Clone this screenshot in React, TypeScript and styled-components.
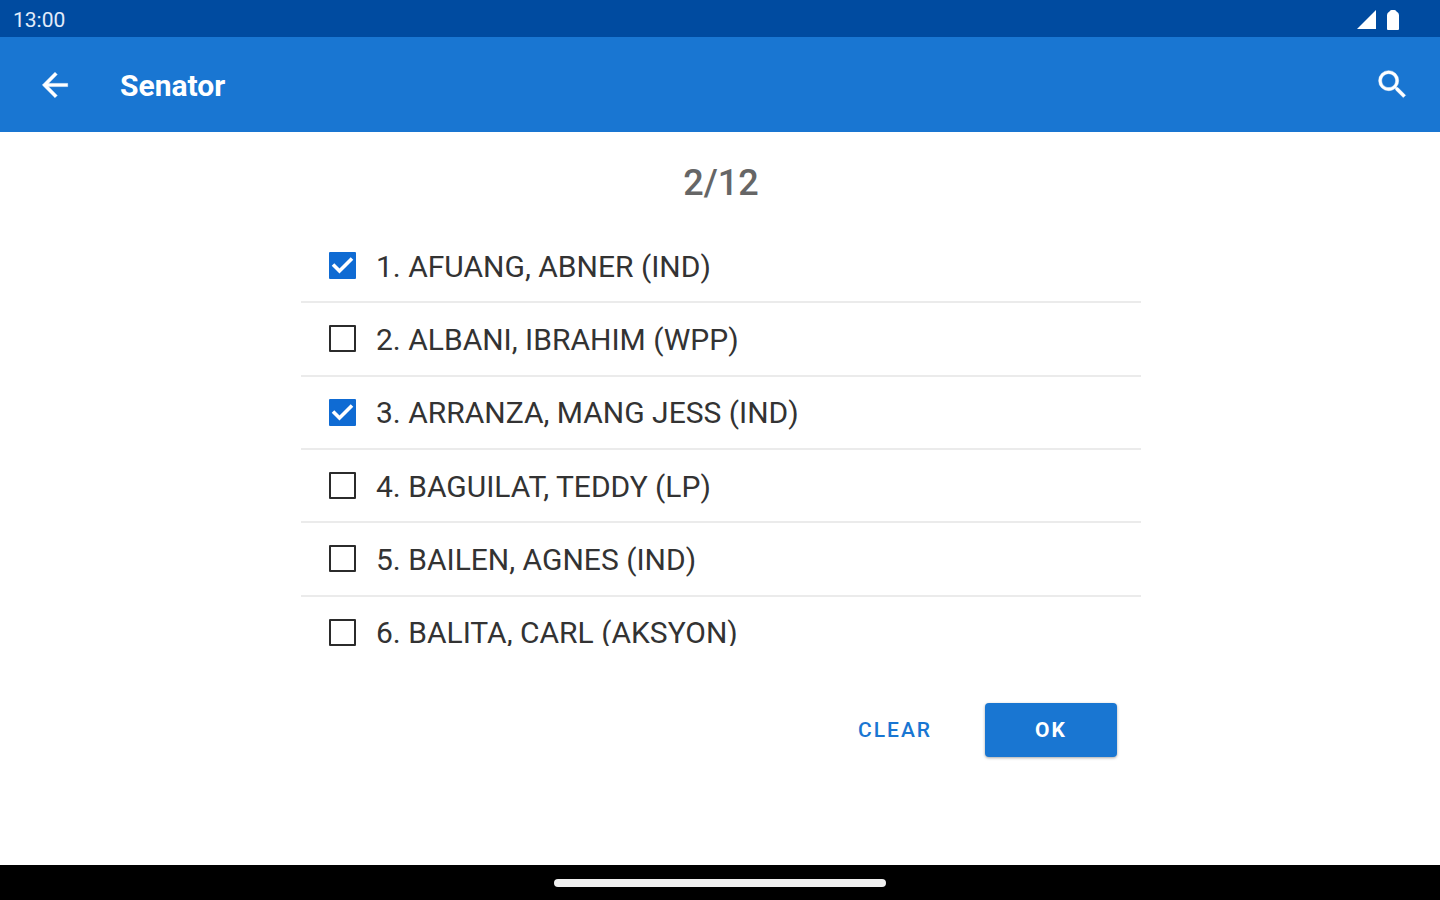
import React, { useState } from "react";
import styled, { createGlobalStyle } from "styled-components";

const GlobalStyle = createGlobalStyle`
  *, *::before, *::after { box-sizing: border-box; }
  body {
    margin: 0;
    background: #ffffff;
    color: #333333;
    font-family: Roboto, "Liberation Sans", sans-serif;
  }
`;

const Screen = styled.div`
  display: flex;
  flex-direction: column;
  min-height: 100vh;
`;

const StatusBar = styled.div`
  display: flex;
  align-items: center;
  justify-content: space-between;
  height: 37px;
  padding: 2px 41px 0 13px;
  background: #004ba0;
  color: #e3ecfa;
  font-size: 21px;
  line-height: 24px;
`;

const StatusIcons = styled.div`
  display: flex;
  align-items: center;
  gap: 11px;
`;

const AppBar = styled.header`
  display: flex;
  align-items: center;
  height: 95px;
  padding: 0 29px 0 36px;
  background: #1976d2;
  color: #ffffff;
`;

const IconButton = styled.button`
  display: flex;
  align-items: center;
  justify-content: center;
  width: 38px;
  height: 48px;
  padding: 0;
  border: 0;
  background: none;
  color: inherit;
  cursor: pointer;
`;

const Title = styled.h1`
  flex: 1;
  margin: 0 0 0 46px;
  padding-top: 2px;
  font-size: 30px;
  font-weight: 700;
  line-height: 36px;
`;

const Content = styled.main`
  display: flex;
  flex: 1;
  flex-direction: column;
  align-items: center;
  padding: 29px 24px 28px 26px;
`;

const Counter = styled.p`
  margin: 0 0 25px;
  color: #666666;
  font-size: 36px;
  font-weight: 500;
  line-height: 44px;
`;

const ListViewport = styled.div`
  width: 100%;
  max-width: 840px;
  height: 416px;
  overflow: hidden;
`;

const CandidateList = styled.ul`
  display: flex;
  flex-direction: column;
  height: 440px;
  margin: 0;
  padding: 0;
  list-style: none;
`;

const CandidateRow = styled.li`
  display: flex;
  flex: 1;
  border-bottom: 2px solid #ebebeb;
`;

const CandidateLabel = styled.label`
  display: flex;
  flex: 1;
  align-items: center;
  gap: 20px;
  padding: 0 28px;
  font-size: 30px;
  font-weight: 400;
  line-height: 36px;
  cursor: pointer;
`;

const CandidateName = styled.span`
  padding-top: 2px;
`;

const CheckFrame = styled.span`
  display: grid;
  width: 27px;
  height: 27px;

  > * {
    grid-area: 1 / 1;
  }
`;

const CheckInput = styled.input`
  appearance: none;
  width: 27px;
  height: 27px;
  margin: 0;
  border: 2px solid #2b2b2b;
  border-radius: 1px;
  cursor: pointer;

  &:checked {
    border-color: #0f6bd3;
    background: #0f6bd3;
  }
`;

const Actions = styled.div`
  display: flex;
  justify-content: flex-end;
  gap: 30px;
  width: 100%;
  max-width: 840px;
  margin-top: 57px;
  padding: 0 24px;
`;

const ActionButton = styled.button<{ $filled?: boolean }>`
  min-width: ${({ $filled }) => ($filled ? "132px" : "120px")};
  height: 54px;
  padding: 0 20px;
  border: 0;
  border-radius: 4px;
  background: ${({ $filled }) => ($filled ? "#1976d2" : "transparent")};
  box-shadow: ${({ $filled }) => ($filled ? "0 1px 3px rgba(0, 0, 0, 0.35)" : "none")};
  color: ${({ $filled }) => ($filled ? "#ffffff" : "#1976d2")};
  font-family: inherit;
  font-size: 21px;
  font-weight: ${({ $filled }) => ($filled ? 700 : 500)};
  line-height: 24px;
  letter-spacing: 2px;
  cursor: pointer;
`;

const NavigationBar = styled.footer`
  display: flex;
  align-items: center;
  justify-content: center;
  height: 35px;
  background: #000000;
`;

const HomeHandle = styled.span`
  width: 332px;
  height: 8px;
  border-radius: 4px;
  background: #f0f0f0;
`;

const candidates = [
  "AFUANG, ABNER (IND)",
  "ALBANI, IBRAHIM (WPP)",
  "ARRANZA, MANG JESS (IND)",
  "BAGUILAT, TEDDY (LP)",
  "BAILEN, AGNES (IND)",
  "BALITA, CARL (AKSYON)",
];

export default function App() {
  const [selected, setSelected] = useState<number[]>([0, 2]);

  const toggle = (index: number) =>
    setSelected((current) =>
      current.includes(index) ? current.filter((i) => i !== index) : [...current, index]
    );

  return (
    <Screen>
      <GlobalStyle />
      <StatusBar>
        <span>13:00</span>
        <StatusIcons>
          <svg width="19" height="19" viewBox="0 0 20 20" fill="#ffffff" aria-hidden="true">
            <path d="M20 0v20H0z" />
          </svg>
          <svg width="12" height="20" viewBox="0 0 12 20" fill="#ffffff" aria-hidden="true">
            <path d="M4.500 0h3Q9 0 9.500 1.500 12 2.500 12 5v14q0 1-1 1H1q-1 0-1-1V5Q0 2.500 2.500 1.500 3 0 4.500 0z" />
          </svg>
        </StatusIcons>
      </StatusBar>
      <AppBar>
        <IconButton type="button" aria-label="Back">
          <svg width="38" height="38" viewBox="0 0 24 24" fill="currentColor" stroke="currentColor" strokeWidth="0.3" aria-hidden="true">
            <path d="M20 11H7.830l5.590-5.590L12 4l-8 8 8 8 1.410-1.410L7.830 13H20v-2z" />
          </svg>
        </IconButton>
        <Title>Senator</Title>
        <IconButton type="button" aria-label="Search">
          <svg width="37" height="37" viewBox="0 0 24 24" fill="currentColor" stroke="currentColor" strokeWidth="0.3" aria-hidden="true">
            <path d="M15.500 14h-.790l-.280-.270A6.471 6.471 0 0 0 16 9.500 6.500 6.500 0 1 0 9.500 16c1.610 0 3.090-.590 4.230-1.570l.270.280v.790l5 4.990L20.490 19l-4.990-5zm-6 0C7.010 14 5 11.990 5 9.500S7.010 5 9.500 5 14 7.010 14 9.500 11.990 14 9.500 14z" />
          </svg>
        </IconButton>
      </AppBar>
      <Content>
        <Counter>{selected.length}/12</Counter>
        <ListViewport>
          <CandidateList>
            {candidates.map((name, index) => {
              const checked = selected.includes(index);
              return (
                <CandidateRow key={name}>
                  <CandidateLabel>
                    <CheckFrame>
                      <CheckInput type="checkbox" checked={checked} onChange={() => toggle(index)} />
                      {checked && (
                        <svg width="27" height="27" viewBox="0 0 27 27" fill="none" stroke="#ffffff" strokeWidth="3.600" aria-hidden="true">
                          <path d="M4 12.500l6.500 6.500L23 6.500" />
                        </svg>
                      )}
                    </CheckFrame>
                    <CandidateName>{`${index + 1}. ${name}`}</CandidateName>
                  </CandidateLabel>
                </CandidateRow>
              );
            })}
          </CandidateList>
        </ListViewport>
        <Actions>
          <ActionButton type="button" onClick={() => setSelected([])}>CLEAR</ActionButton>
          <ActionButton type="button" $filled>OK</ActionButton>
        </Actions>
      </Content>
      <NavigationBar>
        <HomeHandle />
      </NavigationBar>
    </Screen>
  );
}
